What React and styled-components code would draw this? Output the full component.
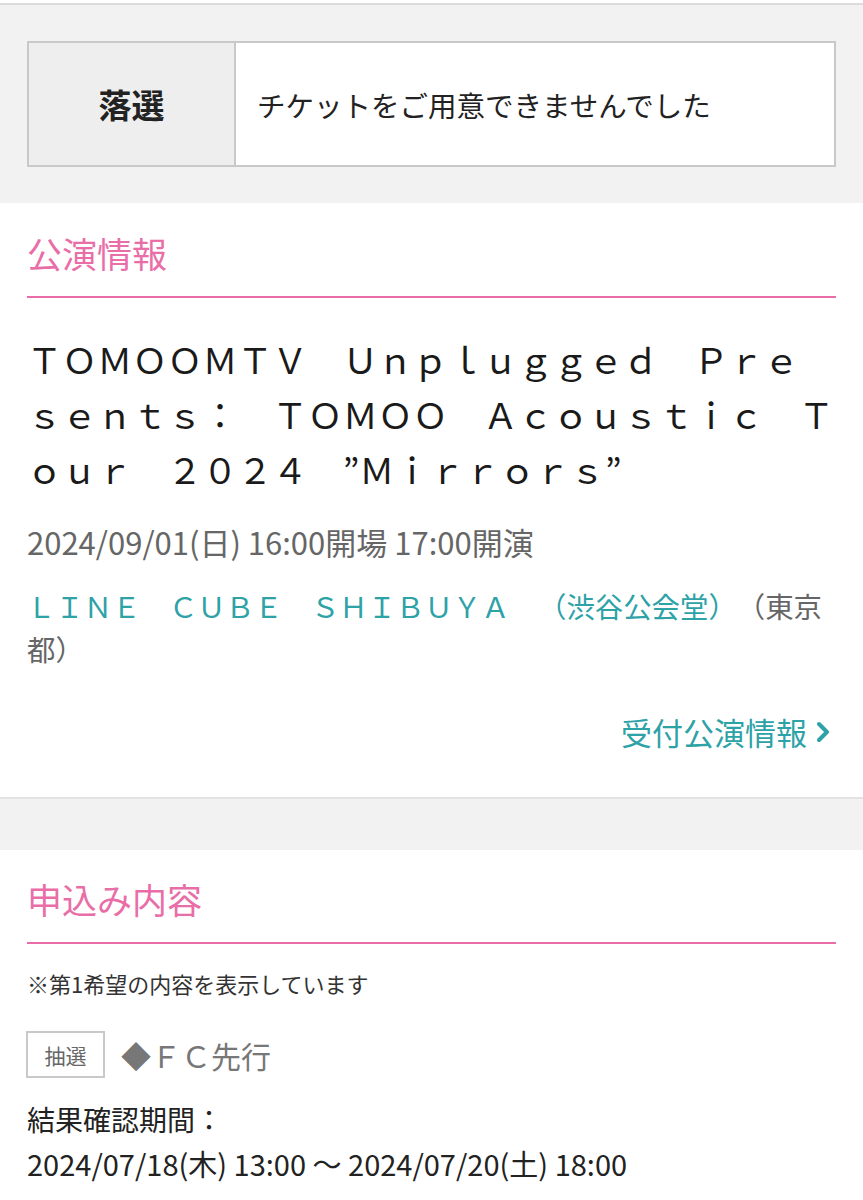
import React from "react";
import styled, { createGlobalStyle } from "styled-components";

const GlobalStyle = createGlobalStyle`
  body {
    margin: 0;
    background: #ffffff;
    font-family: "Noto Sans CJK JP", "Noto Sans", sans-serif;
    color: #222222;
    text-spacing-trim: space-all;
  }
`;

const PINK = "#e96ea7";
const TEAL = "#2da2a7";

const Page = styled.div`
  width: 863px;
  padding-top: 3px;
`;

const ResultArea = styled.div`
  background: #f2f2f2;
  border-top: 2px solid #dcdcdc;
  padding: 36px 27px;
`;

const ResultTable = styled.div`
  display: flex;
  height: 126px;
  border: 2px solid #c9c9c9;
  box-sizing: border-box;
  background: #ffffff;
`;

const ResultLabel = styled.div`
  width: 205px;
  flex-shrink: 0;
  display: flex;
  align-items: center;
  justify-content: center;
  background: #eeeeee;
  border-right: 2px solid #c9c9c9;
  font-size: 33px;
  font-weight: bold;
  color: #222222;
`;

const ResultText = styled.div`
  display: flex;
  align-items: center;
  padding-left: 21px;
  font-size: 28.5px;
  color: #222222;
`;

const Section = styled.section`
  background: #ffffff;
  padding: 0 27px ${(p) => p.$bottom || 0}px;
`;

const Heading = styled.h2`
  margin: 0;
  padding: ${(p) => p.$top}px 0 19px;
  font-size: 35px;
  line-height: 48px;
  font-weight: normal;
  color: ${PINK};
  border-bottom: 2px solid ${PINK};
`;

const Title = styled.div`
  margin-top: 33px;
  font-size: 35.1px;
  line-height: 55px;
  color: #1a1a1a;
  white-space: nowrap;
`;

const DateLine = styled.div`
  margin-top: 26px;
  font-size: 31px;
  line-height: 40px;
  color: #666666;
`;

const Venue = styled.div`
  margin-top: 22px;
  font-size: 28.4px;
  line-height: 43px;
  color: #666666;
  text-spacing-trim: space-all;
`;

const VenueName = styled.span`
  color: ${TEAL};
`;

const LinkRow = styled.div`
  display: flex;
  justify-content: flex-end;
  margin-top: 40px;
`;

const InfoLink = styled.a`
  display: flex;
  align-items: center;
  gap: 9px;
  font-size: 31px;
  line-height: 44px;
  color: ${TEAL};
  text-decoration: none;
  margin-right: 6px;
`;

const Spacer = styled.div`
  height: 51px;
  background: #f2f2f2;
  border-top: 2px solid #e2e2e2;
`;

const Note = styled.p`
  margin: 25px 0 0;
  font-size: 22px;
  line-height: 28px;
  color: #333333;
`;

const TypeRow = styled.div`
  display: flex;
  align-items: center;
  gap: 16px;
  margin-top: 34px;
  margin-left: -1px;
`;

const Badge = styled.span`
  display: flex;
  align-items: center;
  justify-content: center;
  width: 79px;
  height: 47px;
  box-sizing: border-box;
  border: 2px solid #c9c9c9;
  font-size: 21px;
  color: #666666;
`;

const TypeName = styled.span`
  font-size: 30px;
  color: #777777;
`;

const PeriodLabel = styled.div`
  margin-top: 19px;
  font-size: 28px;
  line-height: 44px;
  color: #222222;
`;

const PeriodValue = styled.div`
  font-size: 29px;
  line-height: 44px;
  color: #222222;
`;

const Chevron = () => (
  <svg width="14" height="22" viewBox="0 0 14 22">
    <polyline
      points="3,3 11,11 3,19"
      fill="none"
      stroke={TEAL}
      strokeWidth="4"
      strokeLinecap="round"
      strokeLinejoin="round"
    />
  </svg>
);

export default function App() {
  return (
    <Page>
      <GlobalStyle />
      <ResultArea>
        <ResultTable>
          <ResultLabel>落選</ResultLabel>
          <ResultText>チケットをご用意できませんでした</ResultText>
        </ResultTable>
      </ResultArea>

      <Section $bottom={43}>
        <Heading $top={26}>公演情報</Heading>
        <Title>
          ＴＯＭＯＯＭＴＶ　Ｕｎｐｌｕｇｇｅｄ　Ｐｒｅ
          <br />
          ｓｅｎｔｓ：　ＴＯＭＯＯ　Ａｃｏｕｓｔｉｃ　Ｔ
          <br />
          ｏｕｒ　２０２４　”Ｍｉｒｒｏｒｓ”
        </Title>
        <DateLine>2024/09/01(日) 16:00開場 17:00開演</DateLine>
        <Venue>
          <VenueName>ＬＩＮＥ　ＣＵＢＥ　ＳＨＩＢＵＹＡ　（渋谷公会堂）</VenueName>
          （東京都）
        </Venue>
        <LinkRow>
          <InfoLink href="#">
            受付公演情報
            <Chevron />
          </InfoLink>
        </LinkRow>
      </Section>

      <Spacer />

      <Section $bottom={20}>
        <Heading $top={25}>申込み内容</Heading>
        <Note>※第1希望の内容を表示しています</Note>
        <TypeRow>
          <Badge>抽選</Badge>
          <TypeName>◆ＦＣ先行</TypeName>
        </TypeRow>
        <PeriodLabel>結果確認期間：</PeriodLabel>
        <PeriodValue>2024/07/18(木) 13:00 ～ 2024/07/20(土) 18:00</PeriodValue>
      </Section>
    </Page>
  );
}
